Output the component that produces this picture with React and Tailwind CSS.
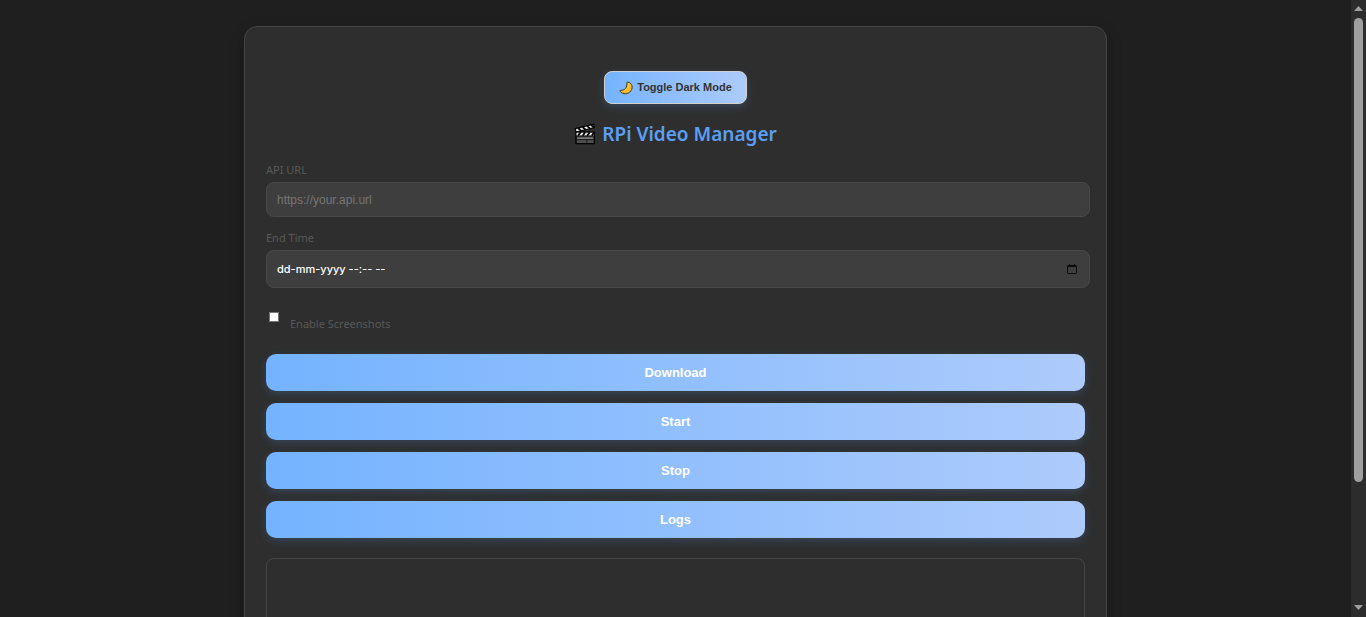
import React from 'react';

const fieldClass =
  'block w-full rounded-lg border border-[#484848] bg-[#3e3e3e] px-[10px] outline-none';
const labelClass = "block font-['Noto_Sans',sans-serif] text-[11px] leading-4 text-[#585858]";

function ActionButton({ children }) {
  return (
    <button
      type="button"
      className="h-[37px] w-full rounded-[10px] bg-linear-to-r from-[#74b3ff] to-[#adcbfb] text-[13px] font-bold text-white shadow-[0_3px_8px_rgba(90,160,255,0.2)]"
    >
      {children}
    </button>
  );
}

function MoonIcon() {
  return (
    <svg aria-hidden="true" viewBox="0 0 14 14" className="size-[14px]">
      <path
        d="M8.8 1C13.2 2.1 14.2 6.6 11.9 9.8C9.3 13.4 3.8 13.9 1 10.2C0.8 9.7 1.1 9.3 1.6 9.4C6.1 9.4 8.3 6.4 7.9 1.6C7.9 1.2 8.3 0.9 8.8 1Z"
        fill="#fcc22f"
        stroke="#2e2718"
        strokeWidth="0.9"
        strokeLinejoin="round"
      />
      <path d="M4 11.3C7.5 11.6 10.6 9.5 11.2 6" fill="none" stroke="#f5a623" strokeWidth="0.7" />
    </svg>
  );
}

function ClapperIcon() {
  return (
    <svg aria-hidden="true" viewBox="0 0 22 22" className="size-[22px]">
      <path d="M1.2 5.6L19.6 1.2L20.4 4.7L2 9.2Z" fill="#eeeeee" stroke="#000" strokeWidth="1.2" strokeLinejoin="round" />
      <path d="M4 5L7.2 7.8M8.5 4L11.7 6.8M13 2.9L16.2 5.6M17.2 2L19.8 4.4" stroke="#000" strokeWidth="1.8" />
      <path d="M2 9.2H20.4V20.6H2Z" fill="#505050" stroke="#000" strokeWidth="1.4" strokeLinejoin="round" />
      <path d="M2.6 9.7H19.8V12.4H2.6Z" fill="#eeeeee" />
      <path d="M6.6 9.2L4 12.8M11.2 9.2L8.6 12.8M15.8 9.2L13.2 12.8M20 9.4L17.8 12.8" stroke="#000" strokeWidth="1.8" />
      <path d="M3 13.2H19.5M3 16.7H19.5M12.8 16.7V19.8" stroke="#161616" strokeWidth="1" />
      <path d="M3.2 15.2H19.2" stroke="#858585" strokeWidth="1.2" />
    </svg>
  );
}

function CalendarIcon() {
  return (
    <svg aria-hidden="true" viewBox="0 0 10 10" className="size-[10px]">
      <path d="M1 1H9V3H1ZM2 0H3V1H2ZM7 0H8V1H7Z" fill="#0c0c0c" />
      <rect x="0.5" y="1.5" width="9" height="8" rx="0.8" fill="none" stroke="#0c0c0c" />
    </svg>
  );
}

function ScrollTrack() {
  return (
    <div aria-hidden="true" className="flex w-[15px] shrink-0 flex-col items-center bg-[#2c2c2c] pt-[6px] pb-[7px]">
      <svg viewBox="0 0 9 5" className="h-[5px] w-[9px] shrink-0">
        <path d="M4.5 0L9 5H0Z" fill="#9f9f9f" />
      </svg>
      <div className="flex w-full flex-1 flex-col items-center py-[7px]">
        <div className="h-4/5 w-[9px] rounded-full bg-[#9f9f9f]" />
      </div>
      <svg viewBox="0 0 9 5" className="h-[5px] w-[9px] shrink-0">
        <path d="M0 0H9L4.5 5Z" fill="#9f9f9f" />
      </svg>
    </div>
  );
}

export default function App() {
  return (
    <div className="flex h-screen bg-[#1f1f1f] font-['Liberation_Sans',Arial,sans-serif]">
      <div className="min-w-0 flex-1 overflow-hidden pt-[26px]">
        <main className="mx-auto w-full max-w-[863px] rounded-[13px] border border-[#454545] bg-[#2e2e2e] px-[21px] pt-11 pb-5 shadow-[0_4px_16px_rgba(0,0,0,0.2)]">
          <div className="flex justify-center">
            <button
              type="button"
              className="flex h-[33px] items-center gap-1 rounded-lg border border-[#d0d0d0] bg-linear-to-r from-[#74b3ff] to-[#adcbfb] px-[14px] text-[11px] font-bold text-[#333333] shadow-[0_3px_8px_rgba(90,160,255,0.2)]"
            >
              <MoonIcon />
              Toggle Dark Mode
            </button>
          </div>
          <h1 className="mt-4 flex h-7 items-center justify-center gap-[6px] font-['Noto_Sans','Open_Sans',sans-serif] text-[19px] font-semibold text-[#5a9ff5]">
            <ClapperIcon />
            RPi Video Manager
          </h1>

          <form className="mt-[14px]" onSubmit={(e) => e.preventDefault()}>
            <div className="-mr-[5px]">
              <label htmlFor="api-url" className={labelClass}>
                API URL
              </label>
              <input
                id="api-url"
                type="text"
                placeholder="https://your.api.url"
                className={`${fieldClass} mt-1 h-[35px] text-[12px] text-white placeholder:text-[#757575]`}
              />
              <label htmlFor="end-time" className={`${labelClass} mt-[13px]`}>
                End Time
              </label>
              <div className={`${fieldClass} mt-1 flex h-[38px] items-center pr-3`}>
                <input
                  id="end-time"
                  type="text"
                  placeholder="dd-mm-yyyy --:-- --"
                  className="min-w-0 flex-1 bg-transparent font-['Inter',sans-serif] text-[11px] font-medium text-white outline-none placeholder:text-white"
                />
                <button type="button" aria-label="Open calendar" className="flex">
                  <CalendarIcon />
                </button>
              </div>
            </div>

            <div className="mt-6 flex items-start gap-[11px] pl-[3px]">
              <input
                id="screenshots"
                type="checkbox"
                className="size-[10px] appearance-none border border-[#767676] bg-white checked:bg-[#74b3ff]"
              />
              <label htmlFor="screenshots" className={`${labelClass} mt-1`}>
                Enable Screenshots
              </label>
            </div>

            <div className="mt-[22px] flex flex-col gap-3">
              <ActionButton>Download</ActionButton>
              <ActionButton>Start</ActionButton>
              <ActionButton>Stop</ActionButton>
              <ActionButton>Logs</ActionButton>
            </div>
          </form>

          <div className="mt-5 h-[200px] rounded-lg border border-[#454545]" />
        </main>
      </div>
      <ScrollTrack />
    </div>
  );
}
